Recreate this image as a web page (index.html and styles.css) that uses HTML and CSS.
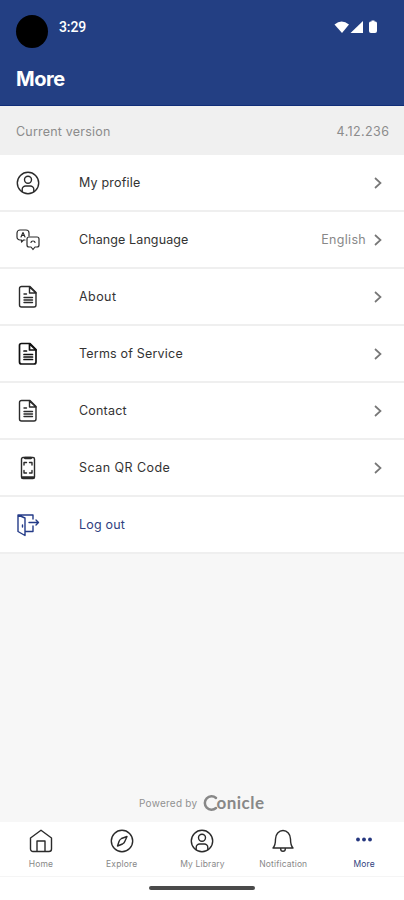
FILE: index.html
```
<!DOCTYPE html>
<html lang="en">
<head>
<meta charset="utf-8">
<title>More</title>
<link rel="stylesheet" href="styles.css">
</head>
<body>
<svg class="defs" width="0" height="0">
  <defs>
    <symbol id="user" viewBox="0 0 24 24"><circle cx="12" cy="12" r="10.700"/><circle cx="12" cy="8.800" r="3.500"/><path d="M6.200 20.500v-2a3.500 3.500 0 0 1 3.500-3.500h4.600a3.500 3.500 0 0 1 3.500 3.500v2"/></symbol>
    <symbol id="doc" viewBox="0 0 24 24"><path d="M5.500 1.500H14l6 6v12.500a2 2 0 0 1-2 2H5.500a2 2 0 0 1-2-2V3.500a2 2 0 0 1 2-2z"/><path d="M13.500 2v6H20zM8 9h2.500M8 12.500h8.500M8 15h8.500M8 17.500h8.500"/></symbol>
    <symbol id="chevron" viewBox="0 0 10 14"><path d="M2 2l5.500 5L2 12"/></symbol>
  </defs>
</svg>
<div class="screen">
  <header class="top">
    <div class="status">
      <span class="camera"></span>
      <span class="time">3:29</span>
      <svg class="signals" width="46" height="16" viewBox="0 0 46 16"><path d="M0.500 4.500Q7.500-1.500 15 4.500L8 13z"/><path d="M29 1V13H16.500z"/><path d="M37.500 0.500h3v1a2 2 0 0 1 2.500 2V11a2 2 0 0 1-2 2H37a2 2 0 0 1-2-2V3.500a2 2 0 0 1 2.500-2z"/></svg>
    </div>
    <h1>More</h1>
  </header>
  <div class="version"><span>Current version</span><span class="number">4.12.236</span></div>
  <main>
    <div class="row"><svg class="icon"><use href="#user"/></svg><span class="label">My profile</span><svg class="chev"><use href="#chevron"/></svg></div>
    <div class="row"><svg class="icon language" viewBox="0 0 24 24"><path d="M9 12H7.500l-2 2v-2H4a3 3 0 0 1-3-3V5a3 3 0 0 1 3-3h6a3 3 0 0 1 3 3v3M5 9l2-4.500L9 9M6 7.500h2"/><path d="M13 9h8a2 2 0 0 1 2 2v6a2 2 0 0 1-2 2h-2l-2 2.500-2-2.500h-2a2 2 0 0 1-2-2v-6a2 2 0 0 1 2-2zM15 14.500c0-2 4-2 4 0"/></svg><span class="label narrow">Change Language</span><span class="value">English</span><svg class="chev"><use href="#chevron"/></svg></div>
    <div class="row"><svg class="icon"><use href="#doc"/></svg><span class="label wide">About</span><svg class="chev"><use href="#chevron"/></svg></div>
    <div class="row"><svg class="icon strong"><use href="#doc"/></svg><span class="label">Terms of Service</span><svg class="chev"><use href="#chevron"/></svg></div>
    <div class="row"><svg class="icon"><use href="#doc"/></svg><span class="label">Contact</span><svg class="chev"><use href="#chevron"/></svg></div>
    <div class="row"><svg class="icon" viewBox="0 0 24 24"><rect x="5.500" y="1.500" width="13" height="21" rx="1.500"/><path class="thick" d="M6.500 21.500h11M9 2h6"/><path d="M8 9V6.500h2.500M13.500 6.500H16V9M8 14.500V17h2.500M13.500 17H16v-2.500"/></svg><span class="label wide">Scan QR Code</span><svg class="chev"><use href="#chevron"/></svg></div>
    <div class="row logout"><svg class="icon" viewBox="0 0 24 24"><path d="M2 2l7 3v17.500l-7-4zM2 2h15v4M9 18.500h8V13M13 9.500h9.500M20 7l2.500 2.500L20 12M6.500 12v2"/></svg><span class="label">Log out</span></div>
  </main>
  <div class="powered"><span>Powered by</span><span class="brand"><svg width="18" height="18" viewBox="0 0 18 18"><path d="M14 4A6.700 6.700 0 1 0 14 14"/></svg><b>onicle</b></span></div>
  <nav>
    <div class="tab"><svg class="icon" viewBox="0 0 24 24"><path d="M1.500 9L12 1.200l10.500 7.800V20a2.500 2.500 0 0 1-2.500 2.500H4A2.500 2.500 0 0 1 1.500 20z"/><path d="M8 22V12h8v10"/></svg><span>Home</span></div>
    <div class="tab"><svg class="icon" viewBox="0 0 24 24"><circle cx="12" cy="12" r="10.700"/><path d="M17 7.500l-2 4.500q-.6 2-2.500 3L7.500 17l1.500-4.500q.7-2 2.500-3z"/></svg><span>Explore</span></div>
    <div class="tab"><svg class="icon"><use href="#user"/></svg><span>My Library</span></div>
    <div class="tab"><svg class="icon" viewBox="0 0 24 24"><path d="M2 19c2.500-2.500 2.500-5 2.500-9a7.500 8.500 0 0 1 15 0c0 4 0 6.500 2.500 9zM9.700 20a2.300 2.300 0 0 0 4.600 0"/></svg><span>Notification</span></div>
    <div class="tab active"><svg class="icon dots" viewBox="0 0 24 24"><circle cx="6" cy="10.500" r="1.900"/><circle cx="12" cy="10.500" r="1.900"/><circle cx="18" cy="10.500" r="1.900"/></svg><span>More</span></div>
  </nav>
  <footer><span class="handle"></span></footer>
</div>
</body>
</html>
```
FILE: styles.css
```
* { box-sizing: border-box; }
body { margin: 0; font-family: Inter, "Liberation Sans", sans-serif; color: #333; }
.defs { display: none; }
.screen { width: 404px; height: 900px; display: flex; flex-direction: column; background: #f7f7f7; overflow: hidden; }
.top { height: 106px; flex: none; background: #233f83; border-bottom: 1px solid #102d78; color: #fff; }
.status { height: 64px; padding: 15px 24px 0 16px; display: flex; align-items: flex-start; }
.camera { width: 32px; height: 33px; border-radius: 50%; background: #000; }
.time { margin-left: 11px; font: 500 14px/24px Roboto, sans-serif; letter-spacing: -.1px; }
.signals { margin: 5px 0 0 auto; fill: #fff; }
h1 { margin: 0; padding-left: 16px; font-size: 20px; line-height: 30px; font-weight: 700; letter-spacing: -.4px; }
.version { height: 49px; flex: none; padding: 1px 15px 0 16px; display: flex; align-items: center; justify-content: space-between; background: #f0f0f0; color: #8c8c8c; font-size: 12.500px; letter-spacing: .2px; }
.number { letter-spacing: .4px; margin-right: -.4px; }
main { flex: none; background: #fff; }
.row { height: 57px; padding: 0 21px 0 16px; display: flex; align-items: center; border-bottom: 2px solid #efefef; font-size: 12.500px; letter-spacing: .2px; }
.icon { width: 24px; height: 24px; flex: none; fill: none; stroke: #2b2b2b; stroke-width: 1.4; stroke-linejoin: round; stroke-linecap: round; }
.strong { stroke: #111; stroke-width: 1.7; }
.thick { stroke-width: 2.3; }
.language { stroke-width: 1.2; }
.label { margin-left: 39px; }
.wide { letter-spacing: .45px; }
.narrow { letter-spacing: .1px; }
.value { margin-left: auto; color: #888; letter-spacing: .3px; }
.chev { width: 10px; height: 14px; margin-left: auto; fill: none; stroke: #777; stroke-width: 1.7; }
.value + .chev { margin-left: 7px; }
.logout { color: #303f80; }
.logout .icon { stroke: #243b88; }
.powered { margin-top: auto; height: 38px; padding-left: 139px; display: flex; align-items: center; color: #919191; font-size: 10px; letter-spacing: .25px; }
.brand { display: flex; align-items: center; margin-left: 5px; color: #888; }
.brand svg { fill: none; stroke: #888; stroke-width: 2.5; stroke-linecap: round; }
.brand b { margin-left: -4px; font: 700 17px/20px Lato, sans-serif; letter-spacing: .5px; }
nav { height: 55px; flex: none; background: #fff; border-bottom: 1px solid #f5f5f5; display: grid; grid-template-columns: repeat(5, 1fr); }
.tab { display: flex; flex-direction: column; align-items: center; padding: 7px 0 0 1px; color: #888; font-size: 8.500px; line-height: 12px; letter-spacing: .15px; }
.tab span { margin-top: 5px; }
.tab.active { color: #303f80; }
.tab .dots { fill: #25377f; stroke: none; }
footer { height: 23px; flex: none; background: #fff; display: flex; justify-content: center; padding-top: 9px; }
.handle { width: 106px; height: 4px; border-radius: 2px; background: #4a4a4a; }
```
